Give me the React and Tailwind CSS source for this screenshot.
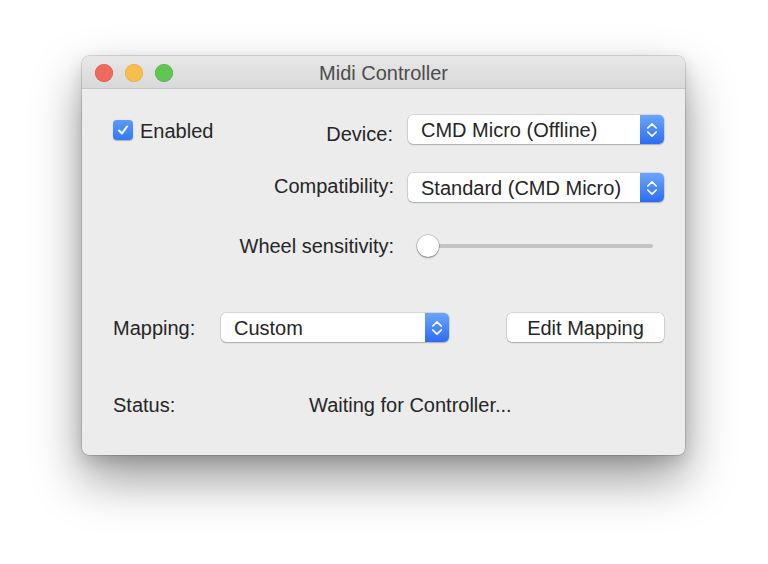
import React from "react";

const font = { fontFamily: '"Liberation Sans", Arial, sans-serif' };

function Chevrons() {
  return (
    <svg width="12" height="16" viewBox="0 0 12 16" fill="none">
      <path d="M1.8 6 L6 1.8 L10.2 6" stroke="white" strokeWidth="1.7" strokeLinecap="round" strokeLinejoin="round" />
      <path d="M1.8 10 L6 14.2 L10.2 10" stroke="white" strokeWidth="1.7" strokeLinecap="round" strokeLinejoin="round" />
    </svg>
  );
}

function Popup({ label, width }) {
  return (
    <div
      className={`flex h-[29px] ${width} items-stretch rounded-[5px] bg-white shadow-[0_0_0_0.5px_rgba(0,0,0,0.18),0_1px_1.5px_rgba(0,0,0,0.2)]`}
    >
      <div className="flex flex-1 items-center pl-[13px] text-[20px] text-[#262626]">{label}</div>
      <div className="flex w-[24px] items-center justify-center rounded-r-[5px] bg-gradient-to-b from-[#6aa5fa] to-[#2d6cf1]">
        <Chevrons />
      </div>
    </div>
  );
}

export default function App() {
  return (
    <div className="flex min-h-[564px] bg-white pl-[82px] pt-[56px]" style={font}>
      <div className="flex h-[399px] w-[603px] flex-col overflow-hidden rounded-[7px] bg-[#ececec] shadow-[0_0_0_0.5px_rgba(0,0,0,0.25),0_24px_50px_rgba(0,0,0,0.4),0_6px_16px_rgba(0,0,0,0.14)]">
        {/* Title bar */}
        <div className="relative flex h-[33px] items-center border-b border-[#c6c6c6] bg-gradient-to-b from-[#e7e7e7] to-[#d9d9d9]">
          <div className="flex items-center gap-[12px] pl-[13px] pt-[1px]">
            <div className="h-[18px] w-[18px] rounded-full bg-[#ee6a5f] shadow-[inset_0_0_0_0.5px_rgba(200,60,50,0.6)]" />
            <div className="h-[18px] w-[18px] rounded-full bg-[#f6be4f] shadow-[inset_0_0_0_0.5px_rgba(200,150,40,0.6)]" />
            <div className="h-[18px] w-[18px] rounded-full bg-[#61c554] shadow-[inset_0_0_0_0.5px_rgba(60,150,50,0.6)]" />
          </div>
          <div className="absolute inset-0 flex items-center justify-center pt-[2px] text-[20px] text-[#4d4d4d]">
            Midi Controller
          </div>
        </div>

        {/* Body */}
        <div className="flex flex-1 flex-col pl-[31px] pr-[21px] pt-[26px] text-[20px] text-[#262626]">
          <div className="flex flex-col gap-[29px]">
            {/* Row 1 */}
            <div className="flex h-[29px] items-center justify-between">
              <div className="flex items-center gap-[7px]">
                <div className="flex h-[20px] w-[20px] items-center justify-center rounded-[4px] bg-gradient-to-b from-[#5c9bf8] to-[#3478f4] shadow-[0_0.5px_1px_rgba(0,0,0,0.25)]">
                  <svg width="14" height="14" viewBox="0 0 14 14" fill="none">
                    <path d="M3 7.5 L6 10.5 L11 3.5" stroke="white" strokeWidth="2" strokeLinecap="round" strokeLinejoin="round" />
                  </svg>
                </div>
                <span className="pt-[2px]">Enabled</span>
              </div>
              <div className="flex items-center gap-[15px]">
                <span className="pt-[8px]">Device:</span>
                <Popup label="CMD Micro (Offline)" width="w-[256px]" />
              </div>
            </div>

            {/* Row 2 */}
            <div className="flex h-[29px] items-center justify-end gap-[14px]">
              <span className="pb-[4px]">Compatibility:</span>
              <Popup label="Standard (CMD Micro)" width="w-[256px]" />
            </div>

            {/* Row 3 */}
            <div className="flex h-[29px] items-center justify-end gap-[14px]">
              <span>Wheel sensitivity:</span>
              <div className="relative flex h-[29px] w-[256px] items-center pl-[20px] pr-[11px]">
                <div className="h-[4px] flex-1 rounded-full bg-[#c3c3c3]" />
                <div className="absolute left-[9px] top-[3.5px] h-[22px] w-[22px] rounded-full bg-white shadow-[0_0_0_0.5px_rgba(0,0,0,0.25),0_1px_2px_rgba(0,0,0,0.3)]" />
              </div>
            </div>
          </div>

          {/* Mapping row */}
          <div className="mt-[53px] flex h-[29px] items-center">
            <span className="w-[108px]">Mapping:</span>
            <Popup label="Custom" width="w-[228px]" />
            <div className="flex-1" />
            <div className="flex h-[29px] w-[157px] items-center justify-center rounded-[5px] bg-white shadow-[0_0_0_0.5px_rgba(0,0,0,0.18),0_1px_1.5px_rgba(0,0,0,0.2)]">
              Edit Mapping
            </div>
          </div>

          {/* Status row */}
          <div className="mt-[48px] flex h-[29px] items-center">
            <span className="w-[196px]">Status:</span>
            <span>Waiting for Controller...</span>
          </div>
        </div>
      </div>
    </div>
  );
}
